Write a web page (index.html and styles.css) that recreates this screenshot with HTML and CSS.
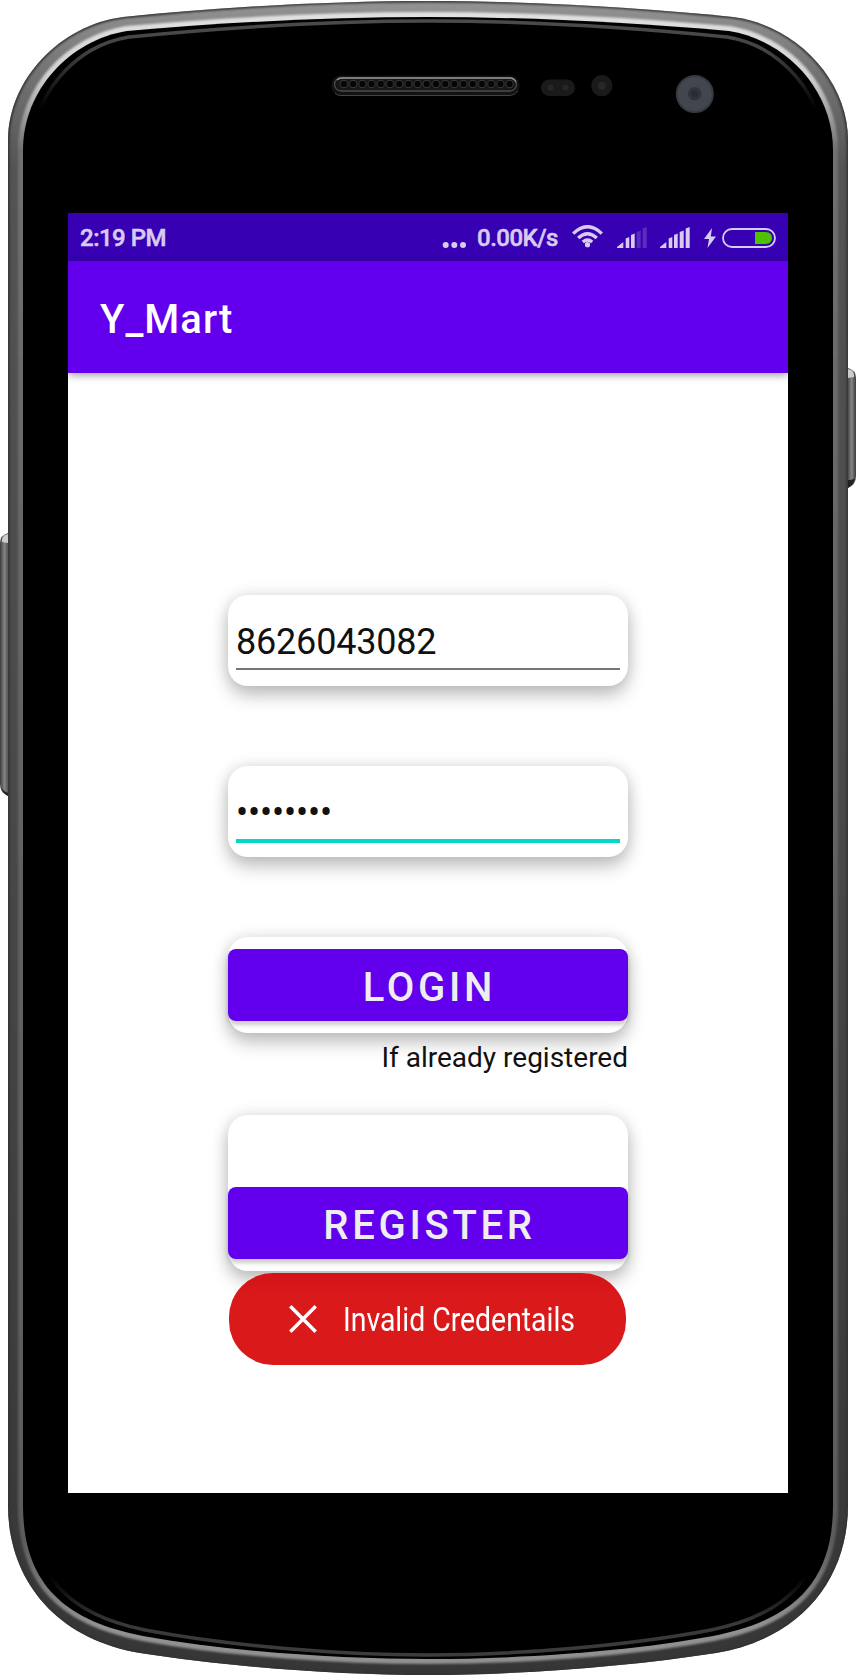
FILE: index.html
```html
<!DOCTYPE html>
<html lang="en">
<head>
<meta charset="utf-8">
<title>Y_Mart</title>
<link rel="stylesheet" href="styles.css">
</head>
<body>
<div class="device">
  <svg class="frame" viewBox="0 0 856 1676" aria-hidden="true">
    <defs>
      <linearGradient id="base" x1="0" y1="0" x2="0" y2="1676" gradientUnits="userSpaceOnUse">
        <stop offset="0" stop-color="#949494"/><stop offset=".04" stop-color="#757575"/><stop offset=".1" stop-color="#545454"/>
        <stop offset=".5" stop-color="#484848"/><stop offset="1" stop-color="#363636"/>
      </linearGradient>
      <linearGradient id="shine" x1="0" y1="0" x2="0" y2="1676" gradientUnits="userSpaceOnUse">
        <stop offset="0" stop-color="#e4e4e4"/><stop offset=".045" stop-color="#d2d2d2"/><stop offset=".09" stop-color="#707070"/>
        <stop offset=".5" stop-color="#626262"/><stop offset=".92" stop-color="#5c5c5c"/><stop offset=".97" stop-color="#929292"/><stop offset="1" stop-color="#909090"/>
      </linearGradient>
      <linearGradient id="rim" x1="0" y1="0" x2="0" y2="1676" gradientUnits="userSpaceOnUse">
        <stop offset="0" stop-color="#505050"/><stop offset=".03" stop-color="#444"/><stop offset=".065" stop-color="#000"/>
        <stop offset=".94" stop-color="#000"/><stop offset=".968" stop-color="#383838"/><stop offset="1" stop-color="#404040"/>
      </linearGradient>
      <linearGradient id="keyR"><stop offset="0" stop-color="#4a4a4a"/><stop offset=".45" stop-color="#858585"/><stop offset="1" stop-color="#3c3c3c"/></linearGradient>
      <linearGradient id="keyL"><stop offset="0" stop-color="#3c3c3c"/><stop offset=".55" stop-color="#858585"/><stop offset="1" stop-color="#555"/></linearGradient>
      <filter id="soft" x="-5%" y="-5%" width="110%" height="110%"><feGaussianBlur stdDeviation="1"/></filter>
      <clipPath id="body"><path d="M8 140C8 80 60 25 123 17C220 7 330 1 428 1C526 1 636 7 733 17C796 25 848 80 848 140V1505C848 1580 800 1639 716 1653C626 1667 516 1675 428 1675C340 1675 230 1667 140 1653C56 1639 8 1580 8 1505Z"/></clipPath>
      <pattern id="holes" x="339.4" y="79" width="9.2" height="10" patternUnits="userSpaceOnUse"><circle cx="4.6" cy="5" r="3.7" fill="#050505" stroke="#3a3a3a" stroke-width="1"/></pattern>
    </defs>
    <path d="M848 368Q856 370 856 378V476Q856 485 848 488Z" fill="url(#keyR)"/>
    <path d="M848 369Q855 371 854 377L848 378Z" fill="#ccc"/>
    <path d="M848 480Q853 480 855 478Q854 485 848 488Z" fill="#222"/>
    <path d="M8 533Q0 535 0 543V784Q0 793 8 796Z" fill="url(#keyL)"/>
    <path d="M8 534Q1 536 2 542L8 543Z" fill="#ccc"/>
    <path d="M8 793Q3 791 1 787Q2 793 8 796Z" fill="#222"/>
    <g clip-path="url(#body)">
      <rect width="856" height="1676" fill="url(#base)"/>
      <path class="line" filter="url(#soft)" d="M8 140C8 80 60 25 123 17C220 7 330 1 428 1C526 1 636 7 733 17C796 25 848 80 848 140V1505C848 1580 800 1639 716 1653C626 1667 516 1675 428 1675C340 1675 230 1667 140 1653C56 1639 8 1580 8 1505Z" stroke="#333" stroke-width="3"/>
      <path class="line" filter="url(#soft)" d="M23 150C23 90 70 40 127 31C230 22 330 17 428 17C526 17 626 22 729 31C786 40 833 90 833 150V1505C833 1580 796 1620 713 1636C626 1652 516 1659 428 1659C340 1659 230 1652 143 1636C60 1620 23 1580 23 1505Z" stroke="url(#shine)" stroke-width="10"/>
    </g>
    <path d="M23 150C23 90 70 40 127 31C230 22 330 17 428 17C526 17 626 22 729 31C786 40 833 90 833 150V1505C833 1580 796 1620 713 1636C626 1652 516 1659 428 1659C340 1659 230 1652 143 1636C60 1620 23 1580 23 1505Z"/>
    <path class="line" d="M32 150C32 96 74 46 129 37C230 27 330 21 428 21C526 21 626 27 727 37C782 46 824 96 824 150V1505C824 1574 790 1614 711 1630C626 1646 516 1655 428 1655C340 1655 230 1646 145 1630C66 1614 32 1574 32 1505Z" stroke="url(#rim)" stroke-width="3.5"/>
    <rect x="331.500" y="75.500" width="188" height="20" rx="9" fill="#121212"/>
    <path class="line" d="M335 93Q337 95.500 341 95.500H510Q515 95 518 91" stroke="#444"/>
    <rect x="334.500" y="78" width="182" height="13" rx="6.500" fill="#161616" stroke="#4c4c4c" stroke-width="1.300"/>
    <path class="line" d="M337 80Q339 78 342 78H510Q514 78 516 82" stroke="#909090" stroke-width="1.300"/>
    <rect x="339.400" y="79" width="174.800" height="10" fill="url(#holes)"/>
    <rect x="541" y="79.500" width="34" height="16.500" rx="8.200" fill="#1a1a1a"/>
    <circle cx="550.500" cy="87.500" r="3" fill="#272727"/><circle cx="565.500" cy="87.500" r="3" fill="#272727"/>
    <circle cx="601.800" cy="85.700" r="10.600" fill="#1a1a1a"/><circle cx="601.800" cy="85.700" r="4" fill="#272727"/>
    <circle cx="694.800" cy="94" r="18" fill="#42464f" stroke="#363940" stroke-width="2"/>
    <circle cx="694.800" cy="93.700" r="6.800" fill="#30353c"/><circle cx="694.800" cy="93.700" r="3.500" fill="#292c33"/>
  </svg>

  <main class="screen">
    <div class="status">
      <span class="clock">2:19 PM</span>
      <svg class="dots" width="24" height="8" viewBox="0 0 24 8"><circle cx="3.700" cy="4" r="3"/><circle cx="12.300" cy="4" r="3"/><circle cx="21" cy="4" r="3"/></svg>
      <span class="rate">0.00K/s</span>
      <svg class="wifi" width="31" height="23" viewBox="0 0 31 23">
        <path d="M1.200 8.600Q15.500 -5.200 29.800 8.600M6.200 13Q15.500 4.500 24.800 13M10.800 17Q15.500 13 20.200 17"/>
        <circle cx="15.500" cy="19.700" r="2.600"/>
      </svg>
      <svg class="signal" width="30" height="21" viewBox="0 0 30 21"><path d="M0 21V20L6.300 15V21ZM8.700 11.500L12.300 10V21H8.700ZM14 8L17.700 6.500V21H14Z"/><path opacity=".22" d="M19.700 5L23.700 3.500V21H19.700ZM25.700 1.500L29.700 0V21H25.700Z"/></svg>
      <svg class="signal two" width="30" height="21" viewBox="0 0 30 21"><path d="M0 21V20L6.300 15V21ZM8.700 11.500L12.300 10V21H8.700ZM14 8L17.700 6.500V21H14ZM19.700 5L23.700 3.500V21H19.700ZM25.700 1.500L29.700 0V21H25.700Z"/></svg>
      <svg class="bolt" width="12" height="20" viewBox="0 0 12 20"><path d="M8 0L0 11H5L3.500 20L12 8.500H6.800Z"/></svg>
      <svg class="battery" width="54" height="20" viewBox="0 0 54 20"><rect x="1" y="1" width="52" height="18" rx="9" fill="none" stroke="#d7ccf0" stroke-width="1.800"/><path d="M33 4H43.500Q50 4.500 50 10T43.500 16H33Z" fill="#4cc200"/></svg>
    </div>
    <header class="appbar"><h1 class="title">Y_Mart</h1></header>
    <form class="form">
      <div class="card field"><span class="value">8626043082</span></div>
      <div class="card field active"><span class="secret">••••••••</span></div>
      <div class="card action"><button class="button" type="button"><span class="label login">LOGIN</span></button></div>
      <p class="hint">If already registered</p>
      <div class="card action tall"><button class="button" type="button"><span class="label register">REGISTER</span></button></div>
      <div class="toast">
        <svg class="cross" width="28" height="28" viewBox="0 0 28 28"><path d="M1.300 1.300L26.700 26.700M26.700 1.300L1.300 26.700"/></svg>
        <span class="message">Invalid Credentails</span>
      </div>
    </form>
  </main>
</div>
</body>
</html>
```
FILE: styles.css
```css
* { box-sizing: border-box; }
body { margin: 0; background: #fff; font-family: Roboto, sans-serif; }
.device { position: relative; width: 856px; height: 1676px; padding: 213px 68px 183px; overflow: hidden; }
.frame { position: absolute; inset: 0; width: 856px; height: 1676px; }
.line { fill: none; }
.screen { position: relative; width: 720px; height: 1280px; background: #fff; overflow: hidden; }

.status { display: flex; align-items: center; height: 48px; padding: 1px 12px 0; background: #3700b3; color: #d7ccf0; fill: #d7ccf0; font-size: 24px; font-weight: 500; white-space: nowrap; }
.clock { margin-right: auto; line-height: 48px; letter-spacing: -.5px; -webkit-text-stroke: .5px; }
.dots { margin: 14px 11px 0 0; }
.rate { width: 83px; margin-right: 12px; line-height: 48px; letter-spacing: -.5px; -webkit-text-stroke: .5px; }
.wifi { margin: -2px 14px 0 0; }
.wifi path { fill: none; stroke: #d7ccf0; stroke-width: 3.4; }
.signal { margin-right: 13px; }
.signal.two { margin-right: 14px; }
.bolt { margin-right: 6px; }

.appbar { position: relative; display: flex; align-items: center; height: 112px; padding: 6px 32px 0; background: #6200ee; color: #fff; box-shadow: 0 2px 8px rgba(0,0,0,.4); }
.title { margin: 0; font-size: 40px; font-weight: 500; line-height: 48px; letter-spacing: 1px; }

.form { display: flex; flex-direction: column; width: 400px; margin: 222px auto 0; }
.card { background: #fff; border-radius: 20px; box-shadow: 0 10px 18px rgba(0,0,0,.22), 0 0 16px rgba(0,0,0,.13); }
.field { height: 91px; margin-bottom: 80px; padding: 24px 8px 0; color: #111; }
.value { display: block; height: 51px; border-bottom: 2px solid #767676; font-size: 36px; line-height: 46px; letter-spacing: -.2px; }
.secret { display: block; height: 53px; border-bottom: 4px solid #03dac5; font-size: 36px; line-height: 46px; letter-spacing: -.15px; }
.action { height: 96px; padding-top: 12px; }
.tall { height: 156px; padding-top: 72px; }
.button { display: flex; align-items: center; justify-content: center; width: 400px; height: 72px; padding: 6px 0 0 3px; border: 0; border-radius: 8px; background: #6200ee; color: #eee; font: 500 40px/48px Roboto, sans-serif; letter-spacing: 3.7px; box-shadow: 0 4px 4px rgba(0,0,0,.2); }
.hint { margin: 8px 0 40px; color: #111; font-size: 28px; line-height: 34px; text-align: right; white-space: nowrap; }
.toast { position: relative; display: flex; align-items: center; width: 397px; height: 92px; margin: 2px 0 0 1px; padding-left: 60px; border-radius: 44px; background: linear-gradient(#d21417, #da191b 24px); color: #fff; }
.cross path { fill: none; stroke: #fff; stroke-width: 3.500; }
.message { margin-left: 26px; padding-top: 1px; font-size: 33px; line-height: 40px; white-space: nowrap; transform: scaleX(.86); transform-origin: left; }
```
